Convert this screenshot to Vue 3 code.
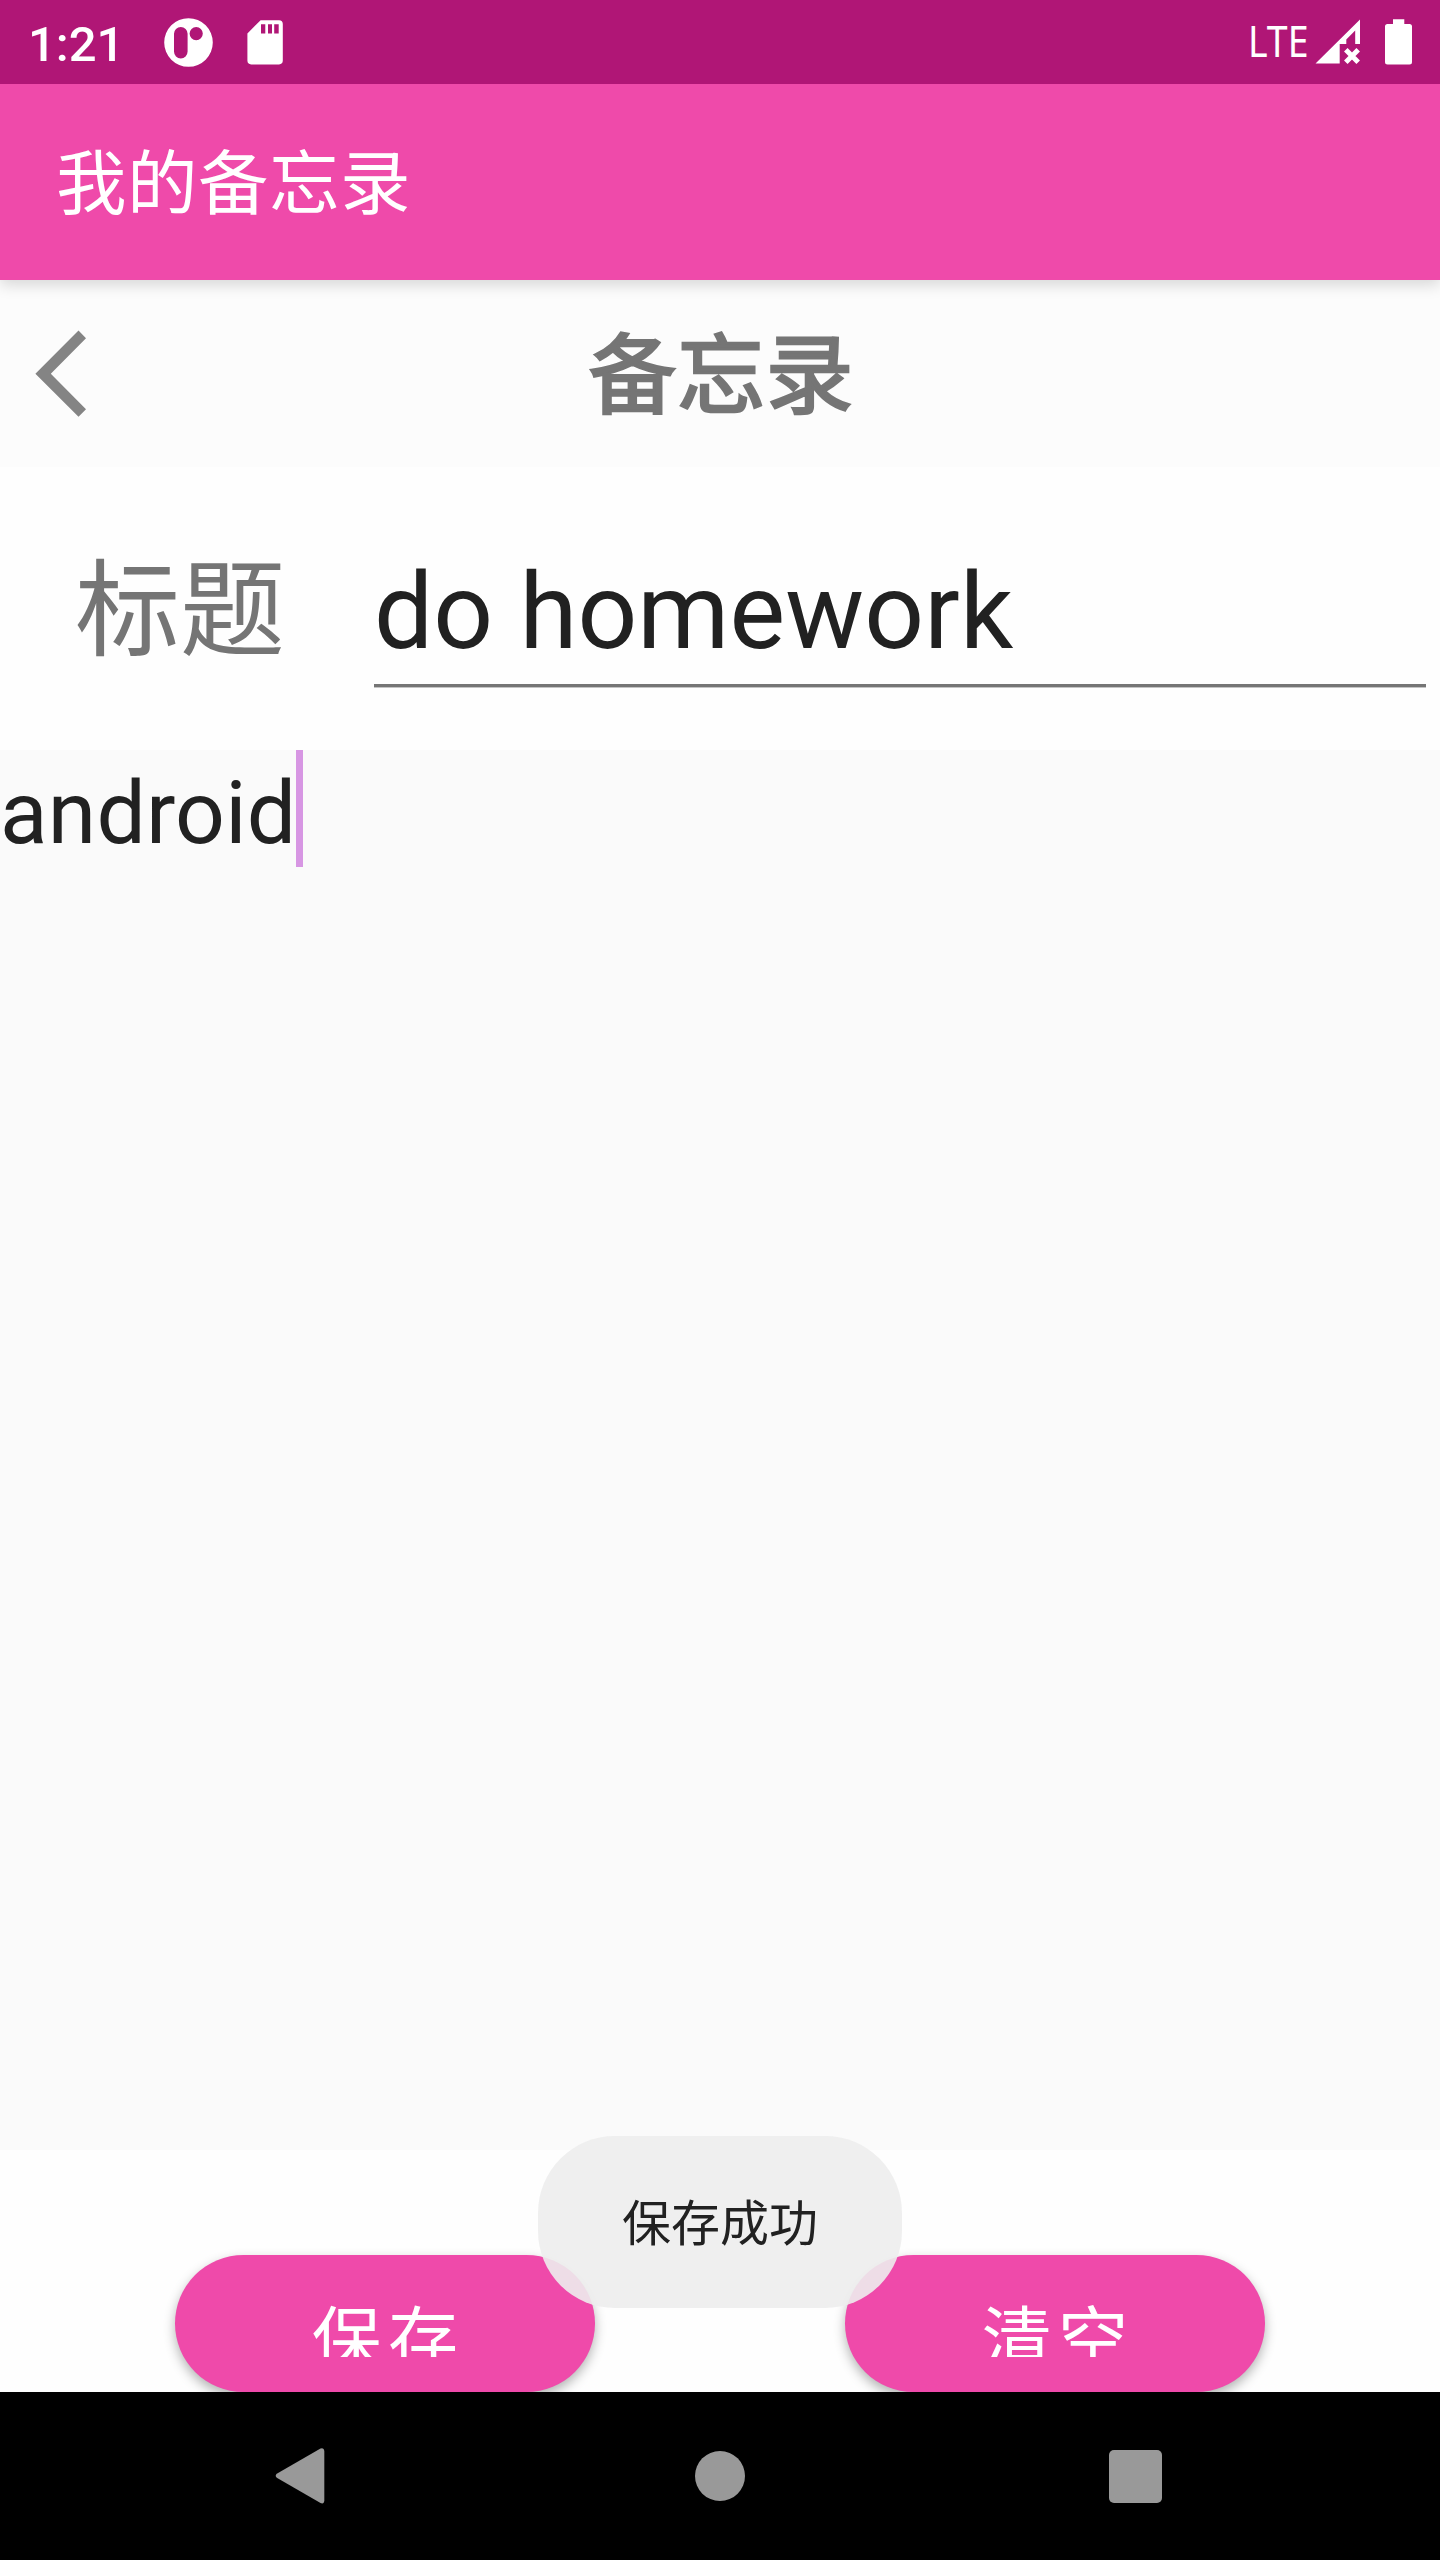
<script setup>
import { ref } from 'vue'

const title = ref('do homework')
const content = ref('android')
const actions = ['保存', '清空']
</script>

<template>
  <div class="screen">
    <header class="status">
      <span class="clock">1:21</span>
      <svg class="notif" viewBox="0 0 49 49">
        <path
          fill="#fff"
          fill-rule="evenodd"
          d="M24.5 .2a24.3 24.3 0 1 0 0 48.6a24.3 24.3 0 1 0 0-48.6zM16.8 9a6.8 6.8 0 0 1 6.8 6.8v17.8a6.8 6.8 0 0 1-13.6 0v-17.8a6.8 6.8 0 0 1 6.8-6.8zM32.2 9a6.6 6.6 0 1 1 0 13.2a6.6 6.6 0 1 1 0-13.2z"
        />
      </svg>
      <svg class="sd" viewBox="0 0 36 45">
        <path
          fill="#fff"
          fill-rule="evenodd"
          d="M13.6 .2H32a3.8 3.8 0 0 1 3.8 3.8V40.600a3.800 3.800 0 0 1-3.800 3.800H4.200a3.800 3.800 0 0 1-3.800-3.800V13.400zM14 4.300V13.600H18.300V4.300zM21 4.300V13.600H25V4.300zM27.200 4.300V13.600H31.700V4.300z"
        />
      </svg>
      <span class="spacer"></span>
      <svg class="lte" viewBox="0 0 62 50">
        <text x="0" y="37" textLength="60.500" lengthAdjust="spacingAndGlyphs">LTE</text>
      </svg>
      <svg class="signal" viewBox="0 0 46 46">
        <path fill="#fff" d="M.5 44.500L45 .5V25H40.200V11.500L31.300 20.500V25H24.700V44.500z" />
        <path stroke="#fff" stroke-width="5" d="M30.800 30.800L43.200 43.200M43.200 30.800L30.800 43.200" />
      </svg>
      <svg class="battery" viewBox="0 0 27 46">
        <path fill="#fff" d="M8 .3H19.300V5H24.500a2.500 2.500 0 0 1 2.500 2.500V43a2.500 2.500 0 0 1-2.500 2.500H2.500A2.500 2.500 0 0 1 0 43V7.500A2.500 2.500 0 0 1 2.500 5H8z" />
      </svg>
    </header>

    <div class="toolbar">我的备忘录</div>

    <div class="heading">
      <svg class="back" viewBox="0 0 52 88">
        <path fill="#848484" d="M43.500 .6L51 8.200L15.800 43.700L51 79.200L43.500 86.800L.4 43.700z" />
      </svg>
      <h1>备忘录</h1>
    </div>

    <div class="title-row">
      <label class="label">标题</label>
      <div class="field">{{ title }}</div>
    </div>

    <div class="editor">
      <span class="content">{{ content }}</span><i class="caret"></i>
    </div>

    <div class="actions">
      <button v-for="action in actions" :key="action" class="action">
        <span class="action-text">{{ action }}</span>
      </button>
      <div class="toast">保存成功</div>
    </div>

    <nav class="nav">
      <svg class="nav-back" viewBox="0 0 50 58">
        <path fill="#999" d="M2.200 26.500L45.500 1.600Q49 .2 49.300 4V53.500Q49 57.500 45.500 56L2.200 31Q-.8 28.700 2.200 26.500z" />
      </svg>
      <span class="nav-home"></span>
      <span class="nav-recent"></span>
    </nav>
  </div>
</template>

<style>
body {
  margin: 0;
  background: #fff;
}
</style>

<style scoped>
.screen {
  width: 1440px;
  height: 2560px;
  display: flex;
  flex-direction: column;
  overflow: hidden;
  background: #fefefe;
  font-family: Roboto, "Noto Sans CJK SC", sans-serif;
  color: #212121;
}
svg {
  display: block;
  flex: none;
}
.status {
  position: relative;
  z-index: 2;
  height: 84px;
  box-sizing: border-box;
  padding: 0 28px;
  display: flex;
  align-items: flex-start;
  background: #b01676;
  color: #fff;
}
.clock {
  width: 136px;
  line-height: 89px;
  font-size: 49px;
  font-weight: 500;
}
.notif {
  width: 49px;
  height: 49px;
  margin-top: 18px;
}
.sd {
  width: 36px;
  height: 45px;
  margin: 20px 0 0 34px;
}
.spacer {
  flex: 1;
}
.lte {
  width: 62px;
  height: 50px;
  margin: 20px 5px 0 0;
  overflow: visible;
}
.lte text {
  font: 43.5px "Noto Sans", sans-serif;
  fill: #fff;
}
.signal {
  width: 46px;
  height: 46px;
  margin: 19px 24px 0 0;
}
.battery {
  width: 27px;
  height: 46px;
  margin-top: 19px;
}
.toolbar {
  position: relative;
  z-index: 1;
  height: 196px;
  box-sizing: border-box;
  padding-left: 56px;
  background: #ef4aaa;
  box-shadow: 0 5px 14px rgba(0, 0, 0, 0.15);
  color: #fff;
  font-family: "Noto Sans CJK SC", sans-serif;
  font-size: 70.5px;
  letter-spacing: 0.5px;
  line-height: 188px;
}
.heading {
  height: 187px;
  display: flex;
  align-items: flex-start;
  background: #fcfcfc;
}
.back {
  width: 52px;
  height: 88px;
  margin: 50px 0 0 35px;
}
.heading h1 {
  flex: 1;
  margin: 0 84px 0 0;
  text-align: center;
  font-family: "Noto Sans CJK SC", sans-serif;
  font-size: 87.5px;
  font-weight: 400;
  letter-spacing: 1px;
  line-height: 178px;
  color: #757575;
  -webkit-text-stroke: 2.7px #757575;
}
.title-row {
  height: 283px;
  display: flex;
  align-items: flex-start;
}
.label {
  width: 299px;
  padding-left: 75px;
  font-family: "Noto Sans CJK SC", sans-serif;
  font-size: 105px;
  line-height: 269px;
  color: #757575;
}
.field {
  width: 1052px;
  height: 217px;
  border-bottom: 3px solid #757575;
  box-shadow: 0 1px 0 #c4c4c4;
  font-size: 105px;
  letter-spacing: 0.1px;
  line-height: 292px;
}
.editor {
  height: 1400px;
  display: flex;
  align-items: flex-start;
  background: #fafafa;
}
.content {
  width: 296px;
  font-size: 87.5px;
  letter-spacing: 0.25px;
  line-height: 126px;
}
.caret {
  width: 7px;
  height: 117px;
  background: #d796e3;
}
.actions {
  position: relative;
  height: 242px;
  box-sizing: border-box;
  padding: 105px 175px 0;
  display: flex;
  justify-content: space-between;
}
.action {
  width: 420px;
  height: 137px;
  padding: 0;
  border: 0;
  border-radius: 69px;
  display: flex;
  justify-content: center;
  align-items: flex-start;
  background: #ef4aaa;
  box-shadow: 0 5px 12px rgba(0, 0, 0, 0.3);
}
.action-text {
  height: 102px;
  padding-left: 6px;
  overflow: hidden;
  color: #fff;
  font-family: "Noto Sans CJK SC", sans-serif;
  font-size: 70px;
  line-height: 160px;
  letter-spacing: 6.25px;
}
.toast {
  position: absolute;
  left: 538px;
  top: -14px;
  width: 364px;
  height: 172px;
  border-radius: 77px;
  background: rgba(237, 237, 237, 0.9);
  text-align: center;
  font-family: "Noto Sans CJK SC", sans-serif;
  font-size: 49px;
  line-height: 168px;
}
.nav {
  height: 168px;
  box-sizing: border-box;
  padding: 0 278px 0 275px;
  display: flex;
  justify-content: space-between;
  align-items: center;
  background: #000;
}
.nav-home {
  width: 50px;
  height: 50px;
  margin-left: 6px;
  border-radius: 50%;
  background: #999;
}
.nav-back {
  width: 50px;
  height: 58px;
}
.nav-recent {
  width: 53px;
  height: 53px;
  border-radius: 5px;
  background: #999;
}
</style>
